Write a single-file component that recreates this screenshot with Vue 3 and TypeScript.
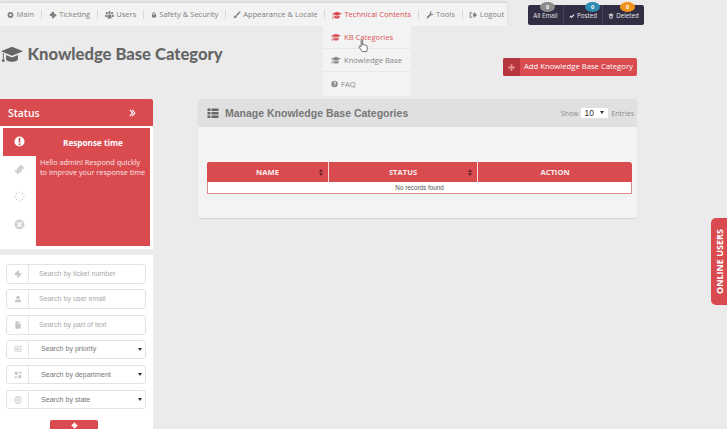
<template>
  <div class="page">
    <header class="top">
      <nav class="nav">
        <a v-for="item in navItems" :key="item.label" class="nav__item" :class="{ 'nav__item--active': item.active }">
          <svg class="nav__icon" viewBox="0 0 24 24" :style="{ width: item.size + 'px' }"><path :d="icons[item.icon]" /></svg>
          {{ item.label }}
        </a>
      </nav>
      <div class="stats">
        <div v-for="s in stats" :key="s.label" class="stats__cell" :style="{ width: s.width + 'px' }">
          <span class="stats__badge" :style="{ background: s.color, left: s.badgeLeft + 'px' }">0</span>
          <svg v-if="s.icon" class="stats__icon" viewBox="0 0 24 24"><path :d="icons[s.icon]" /></svg>
          {{ s.label }}
        </div>
      </div>
    </header>

    <div class="title-row">
      <h1 class="title">
        <svg class="title__icon" viewBox="0 0 24 24"><path :d="icons.cap" /></svg>
        Knowledge Base Category
      </h1>
      <button class="add-btn">
        <span class="add-btn__plus"><svg viewBox="0 0 24 24"><path :d="icons.plus" /></svg></span>
        <span class="add-btn__label">Add Knowledge Base Category</span>
      </button>
    </div>

    <div class="content">
      <aside class="side">
        <div class="status-head">
          Status
          <svg class="status-head__icon" viewBox="0 0 24 24"><path :d="icons.chevrons" /></svg>
        </div>
        <div class="status-box">
          <div class="status-tabs">
            <div v-for="(t, i) in statusTabs" :key="t" class="status-tab" :class="{ 'status-tab--active': i === 0 }">
              <svg viewBox="0 0 24 24"><path :d="icons[t]" /></svg>
            </div>
          </div>
          <div class="status-panel">
            <div class="status-panel__title">Response time</div>
            <p class="status-panel__text">Hello admin! Respond quickly to improve your response time</p>
          </div>
        </div>
        <div class="search">
          <div v-for="f in searchFields" :key="f.label" class="field" :class="{ 'field--select': f.select }">
            <span class="field__icon"><svg viewBox="0 0 24 24"><path :d="icons[f.icon]" /></svg></span>
            <span class="field__text">{{ f.label }}</span>
            <span v-if="f.select" class="field__arrow"></span>
          </div>
          <button class="search__btn"><svg viewBox="0 0 24 24"><path :d="icons.tag" /></svg></button>
        </div>
      </aside>

      <section class="panel">
        <div class="panel__head">
          <svg class="panel__icon" viewBox="0 0 24 24"><path :d="icons.list" /></svg>
          <h2 class="panel__title">Manage Knowledge Base Categories</h2>
          <div class="entries">
            Show
            <span class="entries__select">10<i class="entries__arrow"></i></span>
            Entries
          </div>
        </div>
        <div class="panel__body">
          <table class="table">
            <thead>
              <tr>
                <th class="table__name">NAME<i class="sort"></i></th>
                <th class="table__status">STATUS<i class="sort"></i></th>
                <th>ACTION</th>
              </tr>
            </thead>
            <tbody>
              <tr><td colspan="3">No records found</td></tr>
            </tbody>
          </table>
        </div>
      </section>
    </div>

    <div class="submenu">
      <a v-for="m in subItems" :key="m.label" class="submenu__item" :class="{ 'submenu__item--active': m.active }">
        <svg viewBox="0 0 24 24" :style="{ width: m.size + 'px' }"><path :d="icons[m.icon]" /></svg>
        {{ m.label }}
      </a>
    </div>

    <svg class="cursor" viewBox="0 0 14 18">
      <path d="M4 1.5c.8-.8 1.900-.3 1.900.8v5.200l1-.2c.6-.1 1.200.1 1.400.5.6-.3 1.300-.2 1.600.4.7-.3 1.500 0 1.600.8l.3 3.600c0 1.500-.4 2.600-1 3.600H5.600L2 11.500c-.8-1-.9-1.900-.3-2.400.6-.4 1.300-.1 2 .7l.3.3V2.300z" />
    </svg>

    <div class="online">ONLINE USERS</div>
  </div>
</template>

<script setup lang="ts">
const icons: Record<string, string> = {
  main: "M12 2a10 10 0 1 0 0 20 10 10 0 0 0 0-20zm0 6a4 4 0 1 1 0 8 4 4 0 0 1 0-8z",
  tag: "M12 1l4 4-1.500 1.500 3 3L19 8l4 4-11 11-4-4 1.500-1.500-3-3L5 16l-4-4z",
  users: "M12 9a3.500 3.500 0 1 0 0-7 3.500 3.500 0 0 0 0 7zM5 10a3 3 0 1 0 0-6 3 3 0 0 0 0 6zm14 0a3 3 0 1 0 0-6 3 3 0 0 0 0 6zM6.500 21h11v-6c0-3-2-4.500-5.500-4.500S6.500 12 6.500 15zM0 17h4.800v-2.500c0-1.400.4-2.500 1.200-3.300C5.300 11 4.500 11 3.800 11 1.500 11 0 12 0 14zm24 0h-4.800v-2.500c0-1.400-.4-2.500-1.200-3.300.7-.2 1.500-.2 2.200-.2 2.300 0 3.800 1 3.800 3z",
  lock: "M5 11V8a7 7 0 0 1 14 0v3h1.500v11h-17V11zm3.500 0h7V8a3.500 3.500 0 0 0-7 0z",
  brush: "M22 1c1 .8 1 1.800.3 3L13 15l-4-3.500L19.500 1.500C20.500.7 21.300.5 22 1zM8 13l3.500 3c-.3 3-2.500 6-10.500 6 2-2 1.500-4 3-6.500C4.800 14 6.300 13.200 8 13z",
  cap: "M12 4L0 9l12 5 12-5zM5.500 13v4.500c0 1.700 3 3 6.500 3s6.500-1.300 6.500-3V13L12 15.700zM2 10.500V18H1v2.500h3V18H3v-7z",
  wrench: "M22.500 6.500c.6 3.500-2.300 6.800-6 6.300-.6-.1-1-.2-1.500-.4L6.500 21c-1 1.200-2.600 1.300-3.700.3-1.200-1.100-1.100-2.700 0-3.800l8.700-8.400c-.7-2.500 0-5 2-6.500 1.500-1.100 3.300-1.400 5-.9l-3.500 3.500.8 3.500 3.500.8z",
  logout: "M2 4h8v3H5v10h5v3H2zM12 7.500h4V3l8 9-8 9v-4.500h-4z",
  question: "M12 1a11 11 0 1 0 0 22 11 11 0 0 0 0-22zm-1.700 16h3.400v3h-3.400zm3.400-2.500h-3.200c0-3.400 3.400-3.800 3.400-5.600 0-.9-.7-1.400-1.800-1.400-1 0-2 .5-2.700 1.300L7.500 6.400C8.700 5 10.300 4.200 12.300 4.200c3 0 5 1.600 5 4.300 0 3.200-3.600 3.600-3.600 6z",
  check: "M2 13l3.500-3.500L9.500 13.500 18.500 4.500 22 8 9.500 20.500z",
  trash: "M9 2h6l1 2h5v3H3V4h5zM5 8h14l-1 14H6zm3 3v8h2v-8zm3.200 0v8h1.600v-8zm2.800 0v8h2v-8z",
  plus: "M9.500 3h5v6.500H21v5h-6.500V21h-5v-6.500H3v-5h6.500z",
  list: "M1 3h6v5H1zm8 0h14v5H9zM1 10h6v5H1zm8 0h14v5H9zM1 17h6v5H1zm8 0h14v5H9z",
  chevrons: "M4 4l2.500-2.500L16 12l-9.500 10.500L4 20l7.500-8zM11 4l2.500-2.500L23 12l-9.500 10.500L11 20l7.500-8z",
  alert: "M12 1a11 11 0 1 0 0 22 11 11 0 0 0 0-22zM10 4.500h4l-.5 10h-3zM10 16.500h4V20h-4z",
  ticket: "M15.500 1L23 8.500 20.800 10.700c-1-.8-2.300-.8-3.200.1s-.9 2.200-.1 3.200L8.500 23 1 15.500l2.200-2.200c1 .8 2.300.8 3.200-.1s.9-2.200.1-3.200z",
  spinner: "M10.500 1h3v3h-3zm0 19h3v3h-3zM1 10.500h3v3H1zm19 0h3v3h-3zM3.800 5.900l2.100-2.100 2 2-2.100 2.100zm14.400 14.400l-2-2 2.100-2.100 2 2zM3.800 18.100l2-2 2.100 2.100-2 2zM16.200 5.800l2-2 2.100 2.100-2 2z",
  close: "M12 1a11 11 0 1 0 0 22 11 11 0 0 0 0-22zM8 6l4 4 4-4 2 2-4 4 4 4-2 2-4-4-4 4-2-2 4-4-4-4z",
  user: "M12 2a5.500 5.500 0 1 1 0 11 5.500 5.500 0 0 1 0-11zM3 22c0-5 2-8 5-8.500 1 1 2.500 1.500 4 1.500s3-.5 4-1.500c3 .5 5 3.500 5 8.500z",
  file: "M4 1h9v7h7v15H4zm11 0l5 5h-5z",
  lines: "M1 4h22v2H1zm0 4.500h14v2H1zm16 0h6v2h-6zM1 13h14v2H1zm16 0h6v2h-6zM1 17.500h22v2H1z",
  expand: "M2 2h9v9H2zM13 13h9v9h-9zM14 2h8v8l-3-3-3 3-2-2 3-3zM10 22H2v-8l3 3 3-3 2 2-3 3z",
  target: "M12 1a11 11 0 1 0 0 22 11 11 0 0 0 0-22zm0 2.500a8.500 8.500 0 1 1 0 17 8.500 8.500 0 0 1 0-17zM12 7a5 5 0 1 0 0 10 5 5 0 0 0 0-10zm0 2.500a2.500 2.500 0 1 1 0 5 2.500 2.500 0 0 1 0-5z",
};

const navItems = [
  { label: "Main", icon: "main", size: 7 },
  { label: "Ticketing", icon: "tag", size: 8 },
  { label: "Users", icon: "users", size: 9 },
  { label: "Safety & Security", icon: "lock", size: 6 },
  { label: "Appearance & Locale", icon: "brush", size: 8 },
  { label: "Technical Contents", icon: "cap", size: 10, active: true },
  { label: "Tools", icon: "wrench", size: 8 },
  { label: "Logout", icon: "logout", size: 8 },
];

const subItems = [
  { label: "KB Categories", icon: "cap", size: 10, active: true },
  { label: "Knowledge Base", icon: "cap", size: 10 },
  { label: "FAQ", icon: "question", size: 7 },
];

const stats = [
  { label: "All Email", color: "#8b8b8b", width: 35, badgeLeft: 12 },
  { label: "Posted", color: "#2f8bb0", icon: "check", width: 39, badgeLeft: 21 },
  { label: "Deleted", color: "#f0941c", icon: "trash", width: 42, badgeLeft: 17 },
];

const statusTabs = ["alert", "ticket", "spinner", "close"];

const searchFields = [
  { label: "Search by ticket number", icon: "tag" },
  { label: "Search by user email", icon: "user" },
  { label: "Search by part of text", icon: "file" },
  { label: "Search by priority", icon: "lines", select: true },
  { label: "Search by department", icon: "expand", select: true },
  { label: "Search by state", icon: "target", select: true },
];
</script>

<style>
html, body {
  margin: 0;
  background: #ebebeb;
}
</style>

<style scoped>
.page {
  position: relative;
  width: 727px;
  height: 429px;
  overflow: hidden;
  background: #ebebeb;
  font-family: "Open Sans", sans-serif;
  color: #777;
}
svg { fill: currentColor; display: block; }

.top {
  display: flex;
  align-items: flex-start;
  padding-top: 3px;
}
.nav {
  display: flex;
  align-items: center;
  flex: none;
  width: 507px;
  height: 23px;
  background: #f3f3f3;
  box-shadow: 0 -1px 2px #cfcfcf;
}
.nav__item {
  display: flex;
  align-items: center;
  gap: 2.500px;
  height: 9px;
  padding: 0 6.750px;
  font-size: 7.550px;
  line-height: 9px;
  color: #808080;
  white-space: nowrap;
  border-left: 1px solid #d8d8d8;
}
.nav__item:first-child { border-left: 0; padding-left: 7px; }
.nav__item--active { color: #d94b4f; }
.nav__icon { height: 10px; }

.stats {
  display: flex;
  height: 20px;
  margin: 2px 0 0 21px;
  background: #312d42;
  border-radius: 2px;
}
.stats__cell {
  position: relative;
  display: flex;
  align-items: center;
  justify-content: center;
  gap: 2px;
  padding-top: 1px;
  font-size: 6.200px;
  color: #e6e6ea;
  white-space: nowrap;
  border-left: 1px solid #45415a;
  box-sizing: border-box;
}
.stats__cell:first-child { border-left: 0; }
.stats__icon { width: 6px; height: 6px; }
.stats__badge {
  position: absolute;
  top: -3px;
  width: 15px;
  height: 10px;
  border-radius: 50%;
  font-size: 5.500px;
  font-weight: 700;
  line-height: 10px;
  text-align: center;
  color: #fff;
}

.title-row {
  display: flex;
  align-items: flex-start;
  height: 73px;
}
.title {
  display: flex;
  align-items: center;
  gap: 4.500px;
  flex: none;
  width: 503px;
  height: 20px;
  margin: 18px 0 1px;
  font-family: "Lato", sans-serif;
  font-size: 16.600px;
  font-weight: 900;
  color: #666;
  white-space: nowrap;
}
.title__icon { width: 22px; height: 22px; margin-left: 1px; }
.add-btn {
  display: flex;
  align-items: stretch;
  flex: none;
  width: 134px;
  height: 18px;
  margin-top: 32px;
  padding: 0;
  border: 0;
  border-radius: 2px;
  overflow: hidden;
  background: #d94b4f;
  color: #fff;
  font-family: inherit;
}
.add-btn__plus {
  display: flex;
  align-items: center;
  justify-content: center;
  flex: none;
  width: 17px;
  background: #b5363c;
  color: #e88d8f;
}
.add-btn__plus svg { width: 9px; height: 9px; }
.add-btn__label {
  padding-left: 4px;
  font-size: 7.700px;
  line-height: 17px;
  white-space: nowrap;
}

.content {
  display: flex;
  align-items: flex-start;
  gap: 45px;
}
.side { width: 153px; flex: none; }
.status-head {
  display: flex;
  align-items: center;
  justify-content: space-between;
  height: 27px;
  padding: 0 17px 0 8px;
  background: #d94b4f;
  border-radius: 0 2px 0 0;
  color: #fff;
  font-size: 10.400px;
  font-weight: 600;
}
.status-head__icon { width: 8px; height: 8px; }
.status-box {
  display: flex;
  padding: 2px 3px 3px;
  box-sizing: border-box;
  background: #fff;
  height: 123px;
}
.status-tab {
  display: flex;
  align-items: center;
  justify-content: center;
  width: 33px;
  height: 27.500px;
  color: #d0d0d0;
}
.status-tab svg { width: 11px; height: 11px; }
.status-tab--active { background: #d94b4f; color: #fff; }
.status-panel {
  flex: 1;
  background: #d94b4f;
  color: #fbe6e6;
}
.status-panel__title {
  margin-top: 10px;
  padding-left: 27px;
  font-size: 8.200px;
  font-weight: 700;
  line-height: 10px;
  color: #fff;
}
.status-panel__text {
  margin: 9px 0 0;
  padding: 0 4px;
  font-size: 7.300px;
  line-height: 10px;
}

.search {
  display: flex;
  flex-direction: column;
  margin-top: 6px;
  padding: 9px 7px 0 6px;
  height: 174px;
  background: #fff;
  font-family: "Liberation Sans", sans-serif;
}
.field {
  display: flex;
  align-items: center;
  flex: none;
  height: 20px;
  margin-bottom: 5.300px;
  border: 1px solid #e3e3e3;
  border-radius: 3px;
  box-sizing: border-box;
  font-size: 7.100px;
  color: #a9a9a9;
}
.field--select { color: #777; height: 19px; margin-bottom: 6.200px; }
.field__icon {
  display: flex;
  align-items: center;
  justify-content: center;
  flex: none;
  width: 21px;
  height: 100%;
  border-right: 1px solid #e8e8e8;
  color: #c6c6c6;
}
.field__icon svg { width: 8px; height: 8px; }
.field__text { flex: 1; padding-left: 10px; white-space: nowrap; }
.field--select .field__text { padding-left: 12px; }
.field__arrow {
  width: 0;
  height: 0;
  margin-right: 3px;
  border-left: 2px solid transparent;
  border-right: 2px solid transparent;
  border-top: 3px solid #333;
}
.search__btn {
  display: flex;
  justify-content: center;
  flex: none;
  width: 48px;
  height: 20px;
  margin: 5px 0 0 44px;
  padding: 2px 0 0;
  border: 0;
  border-radius: 2px;
  background: #d94b4f;
  color: #fff;
}
.search__btn svg { width: 7px; height: 7px; }

.panel {
  width: 439px;
  height: 119px;
  flex: none;
  background: #f3f3f3;
  border-radius: 2px;
  box-shadow: 0 1px 1px #d6d6d6;
}
.panel__head {
  display: flex;
  align-items: center;
  height: 28px;
  padding: 0 3px 0 9px;
  background: #e0e0e1;
  border-radius: 2px 2px 0 0;
}
.panel__icon { width: 12px; height: 12px; color: #666; }
.panel__title {
  flex: 1;
  margin: 0 0 0 6px;
  font-family: "Liberation Sans", sans-serif;
  font-size: 10.500px;
  font-weight: 700;
  color: #777;
  white-space: nowrap;
}
.entries {
  display: flex;
  align-items: center;
  gap: 3px;
  font-size: 7px;
  color: #8c8c8c;
}
.entries__select {
  position: relative;
  width: 27px;
  height: 10px;
  padding-left: 3px;
  box-sizing: border-box;
  background: #fff;
  font-family: "Liberation Sans", sans-serif;
  font-size: 8.500px;
  line-height: 10px;
  color: #333;
}
.entries__arrow {
  position: absolute;
  top: 3px;
  right: 4px;
  border-left: 2px solid transparent;
  border-right: 2px solid transparent;
  border-top: 3px solid #333;
}
.panel__body { padding: 35px 5px 0 9px; }
.table {
  width: 425px;
  border-collapse: separate;
  border-spacing: 0;
  table-layout: fixed;
}
.table th {
  position: relative;
  height: 20px;
  padding: 0;
  box-sizing: border-box;
  background: #d94b4f;
  border-left: 1px solid #f3dcdc;
  font-size: 7.600px;
  font-weight: 700;
  color: #fbeeee;
}
.table th:first-child { border-left: 0; border-radius: 2px 0 0 0; }
.table th:last-child { border-radius: 0 3px 0 0; }
.table__name { width: 121px; }
.table__status { width: 149px; }
.sort {
  position: absolute;
  top: 7px;
  right: 5px;
  width: 0;
  height: 0;
  border-left: 2px solid transparent;
  border-right: 2px solid transparent;
  border-bottom: 3px solid #6b2426;
}
.sort::after {
  content: "";
  position: absolute;
  top: 4px;
  left: -2px;
  border-left: 2px solid transparent;
  border-right: 2px solid transparent;
  border-top: 3px solid #6b2426;
}
.table td {
  height: 12px;
  padding: 0;
  background: #fff;
  border: 1px solid #dc8a8c;
  border-top: 0;
  box-sizing: border-box;
  font-family: "Liberation Sans", sans-serif;
  font-size: 6.300px;
  line-height: 11px;
  text-align: center;
  color: #555;
}

.submenu {
  position: absolute;
  top: 26px;
  left: 323px;
  width: 88px;
  background: #f3f3f3;
}
.submenu__item {
  display: flex;
  align-items: center;
  gap: 3px;
  height: 23px;
  padding-left: 8px;
  border-bottom: 1px solid #e8e8e8;
  box-sizing: border-box;
  font-size: 7.600px;
  color: #888;
  white-space: nowrap;
}
.submenu__item:last-child { border-bottom: 0; height: 24px; }
.submenu__item svg { height: 10px; }
.submenu__item--active { color: #d9585c; }

.cursor {
  position: absolute;
  top: 39px;
  left: 358px;
  width: 11px;
  height: 14px;
  fill: #fff;
  stroke: #444;
  stroke-width: 1;
}

.online {
  position: absolute;
  top: 218px;
  right: 0;
  display: flex;
  align-items: center;
  justify-content: center;
  width: 16px;
  height: 87px;
  background: #d94b4f;
  border-radius: 0 5px 5px 0;
  color: #fff;
  font-size: 9px;
  font-weight: 700;
  writing-mode: vertical-rl;
  transform: rotate(180deg);
}
</style>
